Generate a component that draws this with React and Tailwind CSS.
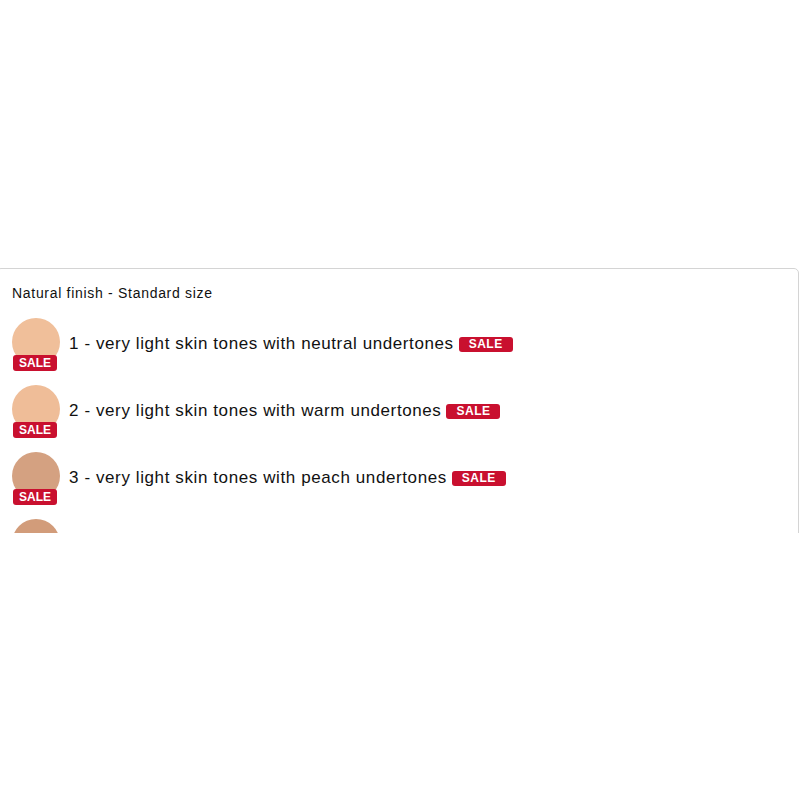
export default function App() {
  const rows = [
    { color: "#f0bf9a", text: "1 - very light skin tones with neutral undertones" },
    { color: "#efbd98", text: "2 - very light skin tones with warm undertones" },
    { color: "#d4a181", text: "3 - very light skin tones with peach undertones" },
    { color: "#d29c7a", text: "4 - light skin tones with neutral undertones" },
  ];
  return (
    <div className="w-[800px] h-[800px] bg-white overflow-hidden" style={{ fontFamily: '"Liberation Sans", Arial, sans-serif' }}>
      <div className="mt-[268px] h-[265px] overflow-hidden">
        <div className="ml-[-4px] w-[803px] h-[400px] border border-[#d4d4d4] rounded-[5px] pl-[15px] pt-[14px] bg-white">
          <div className="text-[14px] leading-[20px] tracking-[0.7px] text-[#111]">Natural finish - Standard size</div>
          <div className="mt-[15px] flex flex-col gap-[19px]">
            {rows.map((r, i) => (
              <div key={i} className="flex items-center h-[48px]">
                <div className="relative w-[48px] h-[48px] shrink-0">
                  <div className="w-[48px] h-[48px] rounded-full" style={{ background: r.color }} />
                  <div className="absolute left-[1px] top-[37px] w-[44px] h-[16px] rounded-[3px] bg-[#c9102f] text-white text-[12px] font-bold leading-[16px] text-center">SALE</div>
                </div>
                <div className="ml-[9px] mt-[3px] flex items-center text-[17px] leading-[24px] tracking-[0.6px] text-[#111]">
                  <span>{r.text}</span>
                  <span className="ml-[5px] mt-[1px] inline-block w-[54px] h-[15px] rounded-[3px] bg-[#c9102f] text-white text-[12px] font-bold leading-[15px] text-center tracking-[0.5px]">SALE</span>
                </div>
              </div>
            ))}
          </div>
        </div>
      </div>
    </div>
  );
}
